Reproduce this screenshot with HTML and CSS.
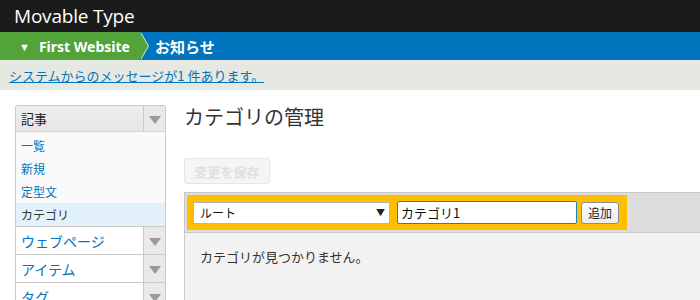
FILE: index.html
```html
<!DOCTYPE html>
<html lang="ja">
<head>
    <meta charset="UTF-8">
    <title>カテゴリの管理 | Movable Type</title>
    <link rel="stylesheet" href="styles.css">
</head>
<body>
    <header class="brand-bar">
        <span class="brand">Movable Type</span>
    </header>

    <nav class="scope-nav">
        <a class="scope-site" href="#"><span class="scope-arrow">&#9660;</span> First Website</a>
        <a class="scope-blog" href="#">お知らせ</a>
    </nav>

    <div class="msg-bar">
        <a href="#">システムからのメッセージが1 件あります。</a>
    </div>

    <div class="layout">
        <aside class="menu">
            <div class="menu-group open">
                <div class="menu-head">
                    <span class="menu-title">記事</span>
                    <span class="menu-toggle"></span>
                </div>
                <ul class="sub-menu">
                    <li><a href="#">一覧</a></li>
                    <li><a href="#">新規</a></li>
                    <li><a href="#">定型文</a></li>
                    <li class="current"><a href="#">カテゴリ</a></li>
                </ul>
            </div>
            <div class="menu-group">
                <div class="menu-head"><a class="menu-title" href="#">ウェブページ</a><span class="menu-toggle"></span></div>
            </div>
            <div class="menu-group">
                <div class="menu-head"><a class="menu-title" href="#">アイテム</a><span class="menu-toggle"></span></div>
            </div>
            <div class="menu-group">
                <div class="menu-head"><a class="menu-title" href="#">タグ</a><span class="menu-toggle"></span></div>
            </div>
        </aside>

        <main class="content">
            <h1 class="page-title">カテゴリの管理</h1>
            <button class="save-btn" disabled>変更を保存</button>

            <section class="cat-panel">
                <div class="panel-head">
                    <form class="add-form">
                        <div class="fake-select">ルート<span class="select-arrow">&#9660;</span></div>
                        <input class="cat-input" type="text" value="カテゴリ1">
                        <button class="add-btn" type="button">追加</button>
                    </form>
                </div>
                <div class="panel-body">
                    <p>カテゴリが見つかりません。</p>
                </div>
            </section>
        </main>
    </div>
</body>
</html>
```

FILE: styles.css
```css
body {
    margin: 0;
    font-family: "Noto Sans CJK JP", "Noto Sans", sans-serif;
    font-size: 13px;
    color: #333;
    background: #fff;
    overflow: hidden;
}

a {
    color: #0074bd;
    text-decoration: none;
}

/* top bars */
.brand-bar {
    height: 32px;
    background-color: #1b1b1b;
    display: flex;
    align-items: center;
    padding-left: 14px;
}

.brand {
    color: #fff;
    font-family: "Open Sans", "Noto Sans", sans-serif;
    font-size: 19px;
    letter-spacing: -0.2px;
}

.scope-nav {
    height: 28px;
    background-color: #0074bd;
    display: flex;
    align-items: center;
}

.scope-nav a {
    color: #fff;
    font-weight: bold;
}

.scope-site {
    position: relative;
    height: 28px;
    width: 140px;
    background-color: #52a33a;
    display: flex;
    align-items: center;
    padding-left: 19px;
    box-sizing: border-box;
    font-family: "Noto Sans", sans-serif;
    font-size: 14px;
}

.scope-site::after {
    content: "";
    position: absolute;
    right: -8px;
    top: 0;
    border-left: 8px solid #52a33a;
    border-top: 14px solid transparent;
    border-bottom: 14px solid transparent;
    filter: drop-shadow(1px 0 0 #d8e8d2);
}

.scope-arrow {
    font-size: 11px;
    margin-right: 9px;
}

.scope-blog {
    margin-left: 15px;
    font-size: 15px;
}

.msg-bar {
    height: 30px;
    background-color: #e6e8e2;
    display: flex;
    align-items: center;
    padding-left: 9px;
}

.msg-bar a {
    text-decoration: underline;
    font-size: 13px;
}

/* layout */
.layout {
    display: flex;
    padding: 15px 0 0 15px;
}

.menu {
    width: 151px;
    flex-shrink: 0;
}

.menu-group {
    border: 1px solid #cacaca;
    border-top: none;
    background: #fff;
}

.menu-group:first-child {
    border-top: 1px solid #cacaca;
    border-radius: 2px 2px 0 0;
}

.menu-head {
    display: flex;
    height: 27px;
}

.open .menu-head {
    height: 25px;
    background: linear-gradient(#eeeeee, #e6e6e6);
    border-bottom: 1px solid #d4d4d4;
}

.menu-title {
    flex: 1;
    display: flex;
    align-items: center;
    padding-left: 5px;
    font-size: 14px;
}

.open .menu-title {
    font-size: 13px;
    color: #222;
}

.menu-toggle {
    width: 21px;
    border-left: 1px solid #cacaca;
    background: #e9e9e9;
    display: flex;
    align-items: center;
    justify-content: center;
}

.menu-toggle::before {
    content: "";
    border-top: 8px solid #9a9a9a;
    border-left: 6px solid transparent;
    border-right: 6px solid transparent;
    margin-top: 2px;
}

.sub-menu {
    list-style: none;
    margin: 0;
    padding: 2px 0 0;
    background: #fafafa;
}

.sub-menu li {
    height: 23px;
    display: flex;
    align-items: center;
    padding-left: 5px;
    font-size: 12px;
}

.sub-menu li.current {
    background: #e2f1fa;
}

.sub-menu li.current a {
    color: #333;
}

/* content */
.content {
    flex: 1;
    padding-left: 18px;
}

.page-title {
    margin: -2px 0 0;
    font-size: 20px;
    font-weight: normal;
    color: #333;
    line-height: 28px;
}

.save-btn {
    margin-top: 27px;
    height: 26px;
    width: 86px;
    font-family: inherit;
    font-size: 13px;
    font-weight: bold;
    color: #e0e0e0;
    background: #f5f5f5;
    border: 1px solid #e6e6e6;
    border-radius: 3px;
}

.cat-panel {
    margin-top: 8px;
    border: 1px solid #c9c9c9;
    border-right: none;
    border-bottom: none;
    height: 120px;
    background: #f2f2f2;
}

.panel-head {
    background: #dcdedc;
    border-bottom: 1px solid #c9c9c9;
    padding: 2px 0 0 2px;
    box-sizing: border-box;
    height: 40px;
}

.add-form {
    display: inline-flex;
    align-items: center;
    gap: 5px;
    background: #ffbe00;
    height: 35px;
    padding: 0 8px 0 6px;
}

.fake-select {
    width: 197px;
    height: 22px;
    box-sizing: border-box;
    border: 1px solid #b5b5b5;
    background: #fff;
    display: flex;
    align-items: center;
    justify-content: space-between;
    padding: 0 4px 0 6px;
    font-size: 12px;
    color: #111;
}

.select-arrow {
    font-size: 9px;
    color: #222;
}

.cat-input {
    width: 180px;
    height: 23px;
    box-sizing: border-box;
    border: 1px solid #1b7fc4;
    border-radius: 2px;
    padding: 0 3px;
    margin-left: 2px;
    font-family: inherit;
    font-size: 13px;
    color: #111;
}

.add-btn {
    width: 38px;
    height: 22px;
    padding: 0;
    font-family: inherit;
    font-size: 12px;
    color: #222;
    background: linear-gradient(#fdfdfd, #ececec);
    border: 1px solid #8d8d8d;
    border-radius: 3px;
    margin-left: -1px;
}

.panel-body p {
    margin: 14px 0 0 15px;
    font-size: 13px;
    color: #333;
}
```
